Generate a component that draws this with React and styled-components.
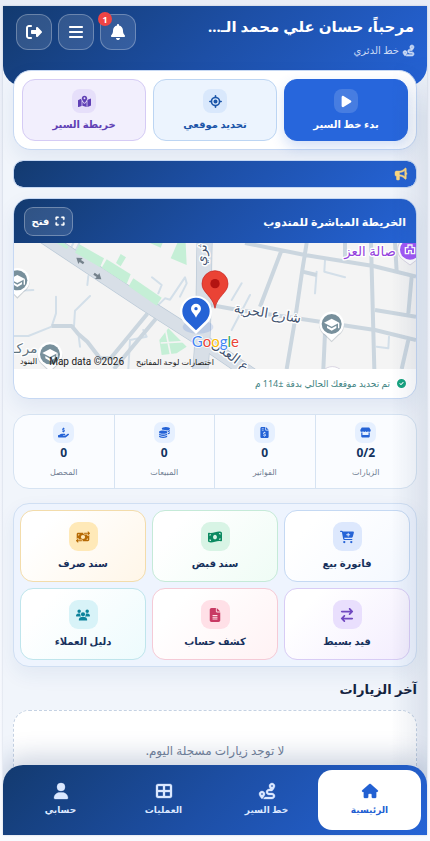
import React, { useState } from "react";
import styled, { createGlobalStyle } from "styled-components";
import {
  FaArrowRightArrowLeft,
  FaBars,
  FaBell,
  FaBullhorn,
  FaCartPlus,
  FaCircleCheck,
  FaCoins,
  FaExpand,
  FaFileInvoiceDollar,
  FaFileLines,
  FaHandHoldingDollar,
  FaHouse,
  FaLocationCrosshairs,
  FaMapLocationDot,
  FaMoneyBillTransfer,
  FaMoneyBillWave,
  FaPlay,
  FaRightFromBracket,
  FaRoute,
  FaStore,
  FaTableCellsLarge,
  FaUser,
  FaUsers,
} from "react-icons/fa6";

const GlobalStyle = createGlobalStyle`
  * {
    box-sizing: border-box;
  }

  body {
    margin: 0;
    background: linear-gradient(180deg, #e9edf6 0%, #f9fbff 100%);
    font-family: "Noto Sans", "DejaVu Sans", sans-serif;
    color: #16305c;
  }

  button {
    font-family: inherit;
    cursor: pointer;
  }
`;

const blueGradient = "linear-gradient(135deg, #133a6f 0%, #1d4fa6 50%, #2563d6 100%)";

// Page shell
const Shell = styled.div`
  position: relative;
  height: calc(100vh - 12px);
  margin: 6px 3px;
  overflow: hidden;
  background: #f1f5fb;
  box-shadow: 0 0 2px rgba(15, 40, 80, 0.2);
`;

const Scroller = styled.div`
  height: 100%;
  overflow-y: auto;
  scrollbar-width: none;
  padding-bottom: 90px;
`;

const EdgeShade = styled.div`
  position: absolute;
  top: 50px;
  right: 0;
  bottom: 40px;
  width: 36px;
  background: linear-gradient(90deg, rgba(30, 60, 110, 0), rgba(30, 60, 110, 0.1));
  mask-image: linear-gradient(180deg, transparent, #000 60px);
  pointer-events: none;
`;

// Header
const Header = styled.header`
  display: flex;
  justify-content: space-between;
  align-items: flex-start;
  height: 80px;
  padding: 8px 13px;
  border-radius: 0 0 20px 20px;
  background: ${blueGradient};
  color: #fff;
`;

const Greeting = styled.h1`
  margin: 0;
  font-size: 15px;
  line-height: 24px;
  font-weight: 700;
  white-space: nowrap;
`;

const RouteName = styled.p`
  display: flex;
  align-items: center;
  gap: 4px;
  margin: 0;
  font-size: 10px;
  line-height: 24px;
  color: #cbdaf5;

  svg {
    stroke: currentColor;
    stroke-width: 28px;
    overflow: visible;
  }
`;

const HeaderButtons = styled.div`
  display: flex;
  gap: 6px;
`;

const HeaderButton = styled.button`
  position: relative;
  display: grid;
  place-items: center;
  width: 36px;
  height: 36px;
  padding: 0;
  border: 1px solid rgba(255, 255, 255, 0.28);
  border-radius: 12px;
  background: rgba(255, 255, 255, 0.12);
  color: #fff;
  font-size: 16px;
`;

const Badge = styled.span`
  position: absolute;
  top: -3px;
  left: -3px;
  display: grid;
  place-items: center;
  width: 14px;
  height: 14px;
  border-radius: 50%;
  background: #ef4444;
  font-size: 9px;
  font-weight: 700;
`;

const Main = styled.main`
  position: relative;
  display: flex;
  flex-direction: column;
  margin-top: -16px;
  padding: 0 10px;
`;

// Route actions
const ActionsCard = styled.section`
  display: grid;
  grid-template-columns: repeat(3, 1fr);
  gap: 7px;
  padding: 8px;
  border: 1px solid #c6d8f3;
  border-radius: 18px;
  background: #fff;
  box-shadow: 0 8px 20px rgba(30, 70, 140, 0.08);
`;

const actionTones = {
  solid: { bg: "#2766dc", border: "#2766dc", icon: "#477de1", text: "#fff" },
  sky: { bg: "#ecf4fe", border: "#bcd5f3", icon: "#d9e8fc", text: "#1b55a8" },
  violet: { bg: "#f2effd", border: "#d5cbf5", icon: "#e6dffa", text: "#6040b5" },
};

const ActionButton = styled.button`
  display: flex;
  flex-direction: column;
  align-items: center;
  gap: 3px;
  height: 62px;
  padding: 9px 4px 0;
  border: 1px solid ${(props) => actionTones[props.$tone].border};
  border-radius: 13px;
  background: ${(props) => actionTones[props.$tone].bg};
  color: ${(props) => actionTones[props.$tone].text};
  box-shadow: ${(props) => (props.$tone === "solid" ? "0 6px 14px rgba(37, 99, 214, 0.2)" : "none")};
  font-size: 10px;
  line-height: 16px;
  font-weight: 700;
  white-space: nowrap;
`;

const ActionIcon = styled.span`
  display: grid;
  place-items: center;
  width: 24px;
  height: 24px;
  border-radius: 8px;
  background: ${(props) => actionTones[props.$tone].icon};

  svg {
    width: auto;
    height: 13px;
  }
`;

const NewsBar = styled.section`
  display: flex;
  align-items: center;
  height: 28px;
  margin-top: 10px;
  padding: 0 9px;
  border: 1px solid #c6d8f3;
  border-radius: 10px;
  background: ${blueGradient};
  background-clip: padding-box;
  color: #fcd881;
  font-size: 12px;

  svg {
    stroke: currentColor;
    stroke-width: 20px;
    overflow: visible;
  }
`;

// Live map
const MapCard = styled.section`
  margin-top: 10px;
  border: 1px solid #c6d8f3;
  border-radius: 16px;
  background: #fff;
  overflow: hidden;
  box-shadow: 0 8px 20px rgba(30, 70, 140, 0.08);
`;

const MapHeader = styled.div`
  display: flex;
  align-items: center;
  justify-content: space-between;
  height: 44px;
  padding: 0 10px;
  background: ${blueGradient};
  color: #fff;
`;

const MapTitle = styled.h2`
  margin: 0;
  font-size: 11px;
  font-weight: 700;
`;

const OpenButton = styled.button`
  display: flex;
  align-items: center;
  justify-content: center;
  gap: 6px;
  width: 49px;
  height: 29px;
  padding: 0;
  border: 1px solid rgba(255, 255, 255, 0.3);
  border-radius: 9px;
  background: rgba(255, 255, 255, 0.12);
  color: #fff;
  font-size: 10px;
  font-weight: 700;

  svg {
    stroke: currentColor;
    stroke-width: 24px;
    overflow: visible;
  }
`;

const MapView = styled.div`
  position: relative;
  height: 126px;
  background: #f4f4f4;

  > svg {
    display: block;
    width: 100%;
    height: 100%;
    direction: ltr;
  }
`;

const MapCredits = styled.div`
  position: absolute;
  left: 0;
  bottom: 0;
  display: flex;
  align-items: center;
  gap: 12px;
  height: 14px;
  padding: 0 2px 0 6px;
  font-family: Roboto, "DejaVu Sans", sans-serif;
  font-size: 10px;
  line-height: 14px;
  color: #222;
  white-space: nowrap;
`;

const CreditButton = styled.button`
  padding: 0;
  border: 0;
  background: none;
  color: inherit;
  font-size: 8px;
`;

const CreditLink = styled.a`
  color: inherit;
  font-size: 8px;
  text-decoration: none;
`;

const MapStatus = styled.p`
  display: flex;
  align-items: center;
  gap: 7px;
  height: 29px;
  margin: 0;
  padding: 0 10px;
  color: #3d8180;
  font-size: 9px;

  svg {
    color: #16a37f;
  }
`;

// Stats
const Stats = styled.section`
  display: grid;
  grid-template-columns: repeat(4, 1fr);
  margin-top: 15px;
  border: 1px solid #d6e3f2;
  border-radius: 16px;
  background: #fafcff;
  overflow: hidden;
`;

const Stat = styled.div`
  display: flex;
  flex-direction: column;
  align-items: center;
  height: 73px;
  padding-top: 7px;

  & + & {
    border-right: 1px solid #d6e3f2;
  }
`;

const StatIcon = styled.span`
  display: grid;
  place-items: center;
  width: 21px;
  height: 21px;
  border-radius: 7px;
  background: #e6f0ff;
  color: #2563d6;

  svg {
    width: auto;
    height: 11px;
  }
`;

const StatValue = styled.strong`
  font-size: 12px;
  line-height: 20px;
  color: #12335f;
`;

const StatLabel = styled.span`
  font-size: 8px;
  line-height: 18px;
  color: #6f7d92;
`;

// Operations
const Operations = styled.section`
  display: grid;
  grid-template-columns: repeat(3, 1fr);
  gap: 6px;
  margin-top: 14px;
  padding: 6px;
  border: 1px solid #d0dff3;
  border-radius: 16px;
  background: #eef4fe;
  box-shadow: 0 8px 20px rgba(30, 70, 140, 0.07);
`;

const operationTones = {
  blue: { border: "#c5d9f3", end: "#f4f8ff", icon: "#dde8fd", color: "#2563d6" },
  green: { border: "#c5ead8", end: "#effcf5", icon: "#d8f4e5", color: "#0b8a61" },
  amber: { border: "#f3dcab", end: "#fff6e8", icon: "#ffe9b8", color: "#b66a05" },
  violet: { border: "#d8ccf5", end: "#f3edfe", icon: "#e9dffd", color: "#7048c0" },
  rose: { border: "#f5cad6", end: "#fff2f4", icon: "#ffe0e7", color: "#c83a64" },
  cyan: { border: "#bfe5ec", end: "#edfbfd", icon: "#d8f3f8", color: "#0d829b" },
};

const OperationButton = styled.button`
  display: flex;
  flex-direction: column;
  align-items: center;
  gap: 4px;
  height: 72px;
  padding: 11px 4px 0;
  border: 1px solid ${(props) => operationTones[props.$tone].border};
  border-radius: 13px;
  background: linear-gradient(135deg, #fff 20%, ${(props) => operationTones[props.$tone].end} 100%);
  color: #16305c;
  font-size: 10px;
  line-height: 16px;
  font-weight: 700;
  white-space: nowrap;
`;

const OperationIcon = styled.span`
  display: grid;
  place-items: center;
  width: 29px;
  height: 29px;
  border-radius: 9px;
  background: ${(props) => operationTones[props.$tone].icon};
  color: ${(props) => operationTones[props.$tone].color};

  svg {
    width: auto;
    height: 14px;
  }
`;

const SectionTitle = styled.h2`
  margin: 10px 0 9px;
  font-size: 13px;
  line-height: 24px;
  font-weight: 700;
  color: #14233f;
`;

const EmptyState = styled.p`
  margin: 0;
  padding: 30px 12px;
  border: 1px dashed #c5d2e3;
  border-radius: 16px;
  background: #fff;
  color: #75839a;
  font-size: 12px;
  line-height: 20px;
  text-align: center;
`;

// Bottom navigation
const BottomNav = styled.nav`
  position: absolute;
  left: 0;
  right: 0;
  bottom: 0;
  display: grid;
  grid-template-columns: repeat(4, 1fr);
  height: 70px;
  padding: 5px 6px;
  border-radius: 20px 20px 0 0;
  background: ${blueGradient};
  box-shadow: 0 -8px 26px rgba(20, 50, 110, 0.22);
`;

const NavItem = styled.a`
  display: flex;
  flex-direction: column;
  align-items: center;
  gap: 3px;
  padding-top: 13px;
  border-radius: 14px;
  background: ${(props) => (props.$active ? "#fff" : "transparent")};
  color: ${(props) => (props.$active ? "#2260d2" : "#dbe8ff")};
  font-size: 9px;
  line-height: 16px;
  font-weight: 700;
  text-decoration: none;

  svg {
    width: auto;
    height: 16px;
    stroke: currentColor;
    stroke-width: 10px;
    overflow: visible;
  }
`;

const actions = [
  { label: "بدء خط السير", tone: "solid", icon: FaPlay },
  { label: "تحديد موقعي", tone: "sky", icon: FaLocationCrosshairs },
  { label: "خريطة السير", tone: "violet", icon: FaMapLocationDot },
];

const stats = [
  { label: "الزيارات", value: "0/2", icon: FaStore },
  { label: "الفواتير", value: "0", icon: FaFileInvoiceDollar },
  { label: "المبيعات", value: "0", icon: FaCoins },
  { label: "المحصل", value: "0", icon: FaHandHoldingDollar },
];

const operations = [
  { label: "فاتورة بيع", tone: "blue", icon: FaCartPlus },
  { label: "سند قبض", tone: "green", icon: FaMoneyBillWave },
  { label: "سند صرف", tone: "amber", icon: FaMoneyBillTransfer },
  { label: "قيد بسيط", tone: "violet", icon: FaArrowRightArrowLeft },
  { label: "كشف حساب", tone: "rose", icon: FaFileLines },
  { label: "دليل العملاء", tone: "cyan", icon: FaUsers },
];

const navItems = [
  { id: "home", label: "الرئيسية", icon: FaHouse },
  { id: "route", label: "خط السير", icon: FaRoute },
  { id: "operations", label: "العمليات", icon: FaTableCellsLarge },
  { id: "account", label: "حسابي", icon: FaUser },
];

const SchoolPin = ({ x, y }) => (
  <g transform={`translate(${x} ${y})`}>
    <path d="M0 52 L-20 32 A37 37 0 1 1 20 32 Z" fill="#8896a0" opacity="0.35" transform="translate(0 3)" />
    <path d="M0 50 L-20 31 A37 37 0 1 1 20 31 Z" fill="#fff" />
    <circle r="30" fill="#78909c" />
    <path d="M0 -16 L23 -4 L0 8 L-23 -4 Z" fill="#fff" />
    <path d="M-14 5 L0 13 L14 5 V12 L0 20 L-14 12 Z M19 -3 h4 v16 h-4 Z" fill="#fff" />
  </g>
);

const PlacePin = ({ x, y }) => (
  <g transform={`translate(${x} ${y})`}>
    <path d="M0 46 L-20 31 A37 37 0 1 1 20 31 Z" fill="#fff" stroke="#c9c2d6" strokeWidth="2" />
    <circle r="30" fill="#a259f7" />
    <path d="M-14 12 V-6 H-6 V-14 H6 V-6 H14 V12 H4 V3 H-4 V12 Z" fill="none" stroke="#fff" strokeWidth="4" />
  </g>
);

const StreetMap = () => (
  <svg viewBox="0 0 1206 378" preserveAspectRatio="xMidYMid slice" role="img" aria-label="خريطة المندوب">
    <rect width="1206" height="378" fill="#f4f4f4" />
    <g fill="none" stroke="#d3dfe9" strokeWidth="6" strokeLinejoin="round" strokeLinecap="round">
      <path d="M0 279 H43 L113 251 L126 211 V161 M228 159 L183 203 L180 249 M193 271 L198 311" />
      <path d="M0 144 L58 141 M223 99 L220 126 M414 103 L443 126 L433 151 M428 191 L453 166 L468 170 L513 103 L518 121 L498 161" />
      <path d="M388 261 L398 281 L348 291 L343 378 M165 28 L178 0 M180 32 L196 0" />
      <path d="M908 86 L903 151 M933 51 L931 86 L993 103 M683 121 L653 171 M708 156 L653 261 M1088 311 L1123 316 L1125 281" />
    </g>
    <g fill="none" stroke="#cbd6df" strokeWidth="12" strokeLinejoin="round">
      <path d="M113 249 L173 249 L193 273 L220 296 L258 346 L290 346 L400 212 M300 378 L425 228" />
      <path d="M693 0 L873 36 L1078 69 L1206 101 M803 21 L738 191 M878 0 L865 81 L843 231 L818 378 M1071 0 L1081 378" />
      <path d="M993 0 V51 M1143 0 L1148 85 M865 86 L908 96 M1083 201 L1206 221 M1193 101 L1183 211" />
      <path d="M590 186 L673 201 L848 226 L1083 261 L1206 291 M933 271 L928 378 M1183 291 L1163 378" />
    </g>
    <path d="M572 -10 C568 120 572 260 558 390" fill="none" stroke="#b9c8d6" strokeWidth="48" />
    <path d="M60 -38 L388 180 L560 290 L720 400" fill="none" stroke="#b9c8d6" strokeWidth="42" />
    <path d="M572 -10 C568 120 572 260 558 390" fill="none" stroke="#d8dfe7" strokeWidth="44" />
    <path d="M60 -38 L388 180 L560 290 L720 400" fill="none" stroke="#d8dfe7" strokeWidth="38" />
    <g fill="#c5efd6">
      <path d="M196 4 L270 46 L258 73 L183 29 Z" />
      <path d="M278 49 L350 94 L338 123 L263 74 Z" />
      <path d="M358 106 L443 164 L428 188 L344 130 Z" />
      <path d="M320 33 L336 43 L320 70 L306 60 Z" />
      <path d="M490 0 H515 L518 66 L470 46 Z" />
      <path d="M408 0 H446 L440 14 Z" />
      <path d="M128 0 H150 L164 12 L158 18 Z" />
      <path d="M463 256 L518 311 L488 331 L443 336 L436 291 Z" />
    </g>
    <path d="M455 262 L470 336 M440 300 L510 296" stroke="#f4f4f4" strokeWidth="5" />
    <g fill="#75828c">
      <path d="M187 44 L206 45 L201 51 L211 58 L207 64 L197 57 L193 63 Z" />
      <path d="M262 109 L243 108 L248 102 L238 95 L242 89 L252 96 L256 90 Z" />
    </g>
    <g
      fontFamily='"Noto Sans", "DejaVu Sans", sans-serif'
      fontSize="40"
      fill="#43536f"
      stroke="#fff"
      strokeWidth="8"
      paintOrder="stroke"
      strokeLinejoin="round"
      textAnchor="middle"
    >
      <text x="760" y="224" transform="rotate(9 760 214)">شارع الحرية</text>
      <text x="1068" y="40" fill="#9440dd">صالة العز</text>
      <text x="33" y="330" fill="#60727e">مركـ</text>
      <text x="568" y="44" transform="rotate(-86 568 36)">ثري</text>
      <text x="650" y="350" transform="rotate(37 650 336)">ع العدل</text>
    </g>
    <SchoolPin x={10} y={112} />
    <SchoolPin x={108} y={334} />
    <SchoolPin x={953} y={243} />
    <PlacePin x={1188} y={20} />
    <PlacePin x={955} y={408} />
    <path
      d="M603 196 C596 158 564 150 564 122 A39 39 0 0 1 642 122 C642 150 610 158 603 196 Z"
      fill="#ea4335"
      stroke="#c5221f"
      strokeWidth="2"
    />
    <circle cx="603" cy="122" r="14" fill="#b31412" />
    <ellipse cx="552" cy="252" rx="46" ry="20" fill="#2563d6" opacity="0.15" />
    <path d="M546 273 L512 240 A48 48 0 1 1 580 240 Z" fill="#fff" />
    <path d="M546 262 L517 234 A41 41 0 1 1 575 234 Z" fill="#2563d6" />
    <path d="M546 224 C542 213 531 206 531 197 A15 15 0 0 1 561 197 C561 206 550 213 546 224 Z" fill="#fff" />
    <circle cx="546" cy="197" r="5" fill="#2563d6" />
    <text
      x="533"
      y="312"
      fontFamily="Lato, sans-serif"
      fontSize="45"
      stroke="#fff"
      strokeWidth="5"
      paintOrder="stroke"
    >
      <tspan fill="#4285f4">G</tspan>
      <tspan fill="#ea4335">o</tspan>
      <tspan fill="#fbbc05">o</tspan>
      <tspan fill="#4285f4">g</tspan>
      <tspan fill="#34a853">l</tspan>
      <tspan fill="#ea4335">e</tspan>
    </text>
  </svg>
);

const App = () => {
  const [activeNav, setActiveNav] = useState("home");

  return (
    <Shell dir="rtl" lang="ar">
      <GlobalStyle />
      <Scroller>
        <Header>
          <div>
            <Greeting>مرحباً، حسان علي محمد الـ...</Greeting>
            <RouteName>
              <FaRoute size={11} />
              خط الدئري
            </RouteName>
          </div>
          <HeaderButtons>
            <HeaderButton type="button" aria-label="الإشعارات">
              <FaBell />
              <Badge>1</Badge>
            </HeaderButton>
            <HeaderButton type="button" aria-label="القائمة">
              <FaBars />
            </HeaderButton>
            <HeaderButton type="button" aria-label="تسجيل الخروج">
              <FaRightFromBracket />
            </HeaderButton>
          </HeaderButtons>
        </Header>

        <Main>
          <ActionsCard>
            {actions.map(({ label, tone, icon: Icon }) => (
              <ActionButton key={label} type="button" $tone={tone}>
                <ActionIcon $tone={tone}>
                  <Icon />
                </ActionIcon>
                {label}
              </ActionButton>
            ))}
          </ActionsCard>

          <NewsBar>
            <FaBullhorn />
          </NewsBar>

          <MapCard>
            <MapHeader>
              <MapTitle>الخريطة المباشرة للمندوب</MapTitle>
              <OpenButton type="button">
                <FaExpand />
                فتح
              </OpenButton>
            </MapHeader>
            <MapView>
              <StreetMap />
              <MapCredits>
                <CreditButton type="button">اختصارات لوحة المفاتيح</CreditButton>
                <span dir="ltr">Map data ©2026</span>
                <CreditLink href="#terms">البنود</CreditLink>
              </MapCredits>
            </MapView>
            <MapStatus>
              <FaCircleCheck />
              <span>تم تحديد موقعك الحالي بدقة ±114 م</span>
            </MapStatus>
          </MapCard>

          <Stats>
            {stats.map(({ label, value, icon: Icon }) => (
              <Stat key={label}>
                <StatIcon>
                  <Icon />
                </StatIcon>
                <StatValue dir="ltr">{value}</StatValue>
                <StatLabel>{label}</StatLabel>
              </Stat>
            ))}
          </Stats>

          <Operations>
            {operations.map(({ label, tone, icon: Icon }) => (
              <OperationButton key={label} type="button" $tone={tone}>
                <OperationIcon $tone={tone}>
                  <Icon />
                </OperationIcon>
                {label}
              </OperationButton>
            ))}
          </Operations>

          <SectionTitle>آخر الزيارات</SectionTitle>
          <EmptyState>لا توجد زيارات مسجلة اليوم.</EmptyState>
        </Main>
      </Scroller>

      <EdgeShade />
      <BottomNav>
        {navItems.map(({ id, label, icon: Icon }) => (
          <NavItem key={id} href={`#${id}`} $active={id === activeNav} onClick={() => setActiveNav(id)}>
            <Icon />
            {label}
          </NavItem>
        ))}
      </BottomNav>
    </Shell>
  );
};

export default App;
